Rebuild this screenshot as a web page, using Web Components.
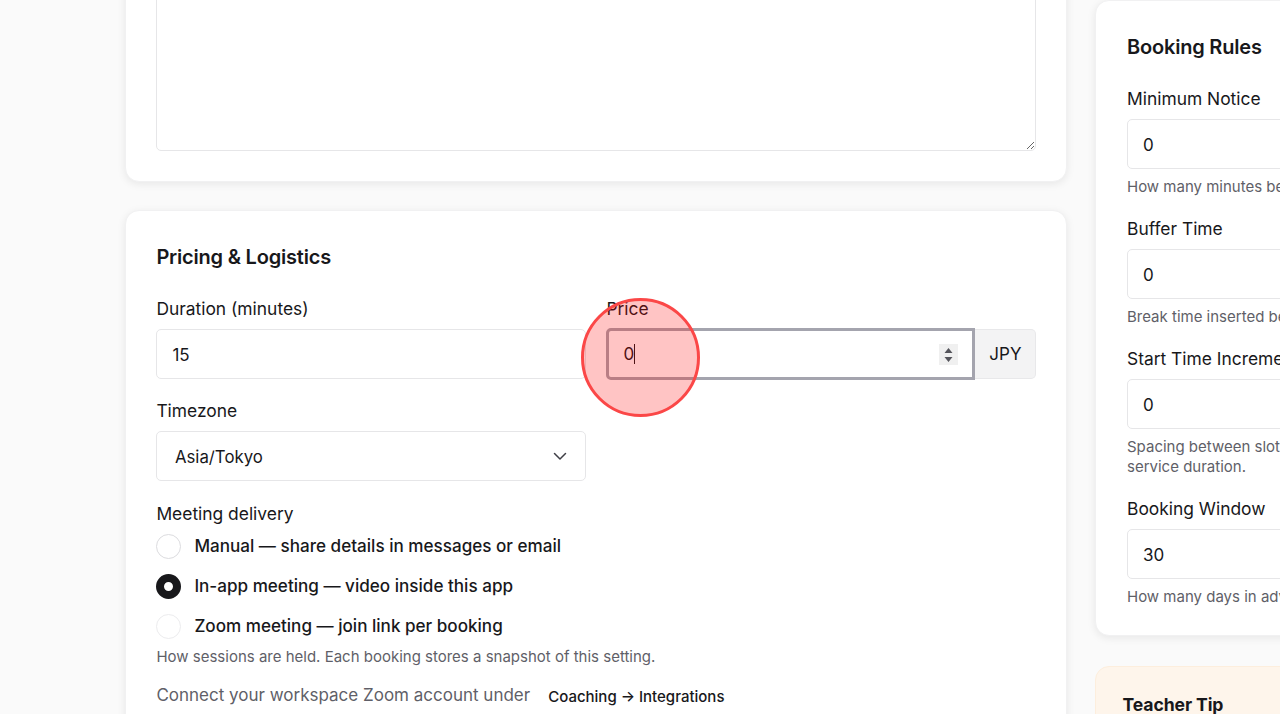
<!DOCTYPE html>
<html lang="en">
<head>
<meta charset="utf-8">
<title>Service settings</title>
<style>
  html, body { margin: 0; height: 714px; overflow: hidden; background: #fafafa; }
  body { font-family: Inter, "Liberation Sans", sans-serif; color: #18181b; font-size: 17px; }
  .page { display: grid; grid-template-columns: 942px 340px; column-gap: 28px; align-items: start; margin-left: 125px; width: 1310px; }
  .main { display: flex; flex-direction: column; gap: 28px; margin-top: -100px; }
  .side { display: flex; flex-direction: column; gap: 30px; --card-pad-x: 31px; --card-pad-bottom: 28px; }
  .grid { display: grid; grid-template-columns: 430px 430px; column-gap: 20px; }
  .stack { display: flex; flex-direction: column; gap: 20px; }
</style>
</head>
<body>
<template id="card-template">
  <style>
    :host { display: block; background: #fff; border: 1px solid #f1f1f2; border-radius: 14px; box-shadow: 0 2px 8px rgba(0,0,0,.08); padding: 30px var(--card-pad-x, 30.4px) var(--card-pad-bottom, 30px); }
    :host([tone="tip"]) { background: #fef5eb; border-color: #fdeedd; box-shadow: none; padding: 22px 26.5px 29px; }
    h2 { margin: 0 0 24px; font: 600 20px/32px Inter, "Liberation Sans", sans-serif; letter-spacing: -.2px; color: #18181b; }
    :host([tone="tip"]) h2 { font-size: 17.6px; font-weight: 700; margin-bottom: 8px; letter-spacing: -.1px; }
    :host(:not([heading])) h2 { display: none; }
  </style>
  <h2></h2>
  <slot></slot>
</template>
<template id="field-template">
  <style>
    :host { display: block; }
    .label { font-size: 17.4px; line-height: 24px; margin-bottom: 8px; color: #18181b; }
    .hint { font-size: 15px; line-height: 20px; color: #5f5f68; white-space: nowrap; }
    ::slotted([slot="hint"]) { display: block; margin-top: 8px; }
  </style>
  <div class="label"><slot name="label"></slot></div>
  <slot></slot>
  <div class="hint"><slot name="hint"></slot></div>
</template>
<template id="box-template">
  <style>
    :host { display: flex; align-items: center; box-sizing: border-box; height: 50px; background: #fff; border: 1px solid #e6e6e8; border-radius: 5px; padding: 1px 15px 0; font-size: 17px; color: #18181b; }
    :host([kind="select"]) { padding: 1px 17.5px 0; justify-content: space-between; font-size: 16.8px; }
    svg { display: none; }
    :host([kind="select"]) svg { display: block; margin: -1px 0 0; }
  </style>
  <slot></slot>
  <svg width="16" height="16" viewBox="0 0 16 16" fill="none" stroke="#3f3f46" stroke-width="1.5" stroke-linecap="round" stroke-linejoin="round"><path d="M2.500 5.500 8 11l5.500-5.500"/></svg>
</template>
<template id="price-template">
  <style>
    :host { display: flex; height: 50px; font-size: 17px; color: #18181b; }
    .input { position: relative; z-index: 1; flex: none; box-sizing: border-box; width: 369px; height: 52px; margin-top: -1px; display: flex; align-items: center; justify-content: space-between; background: #fff; border: 3px solid #a4a4ae; border-radius: 5px 0 0 5px; padding: 0 14px; }
    .value { display: flex; align-items: center; }
    .caret { width: 1px; height: 20px; background: #18181b; }
    .spin { width: 19px; height: 21px; background: #f0f0f0; display: block; }
    .unit { flex: 1; display: flex; align-items: center; justify-content: center; box-sizing: border-box; background: #f3f3f4; border: 1px solid #e8e8ea; border-left: 0; border-radius: 0 5px 5px 0; font-size: 17px; }
  </style>
  <div class="input">
    <span class="value"><slot></slot><span class="caret"></span></span>
    <svg class="spin" viewBox="0 0 19 21"><path fill="#55555c" d="M9.500 4 13.500 9H5.500zM5.500 13h8l-4 5z"/></svg>
  </div>
  <div class="unit"><slot name="unit"></slot></div>
</template>
<template id="radio-template">
  <style>
    :host { display: flex; align-items: center; gap: 13px; height: 25px; font-size: 17.1px; font-weight: 450; color: #18181b; }
    .dot { flex: none; box-sizing: border-box; width: 25px; height: 25px; border-radius: 50%; background: #fff; border: 1px solid #dcdcdf; }
    .text { margin-top: -2px; }
    :host([faint]) .dot { border-color: #ececee; }
    :host([checked]) .dot { border: 8px solid #18181b; }
  </style>
  <span class="dot"></span>
  <span class="text"><slot></slot></span>
</template>
<template id="pointer-template">
  <style>
    :host { position: absolute; left: 580.5px; top: 297.5px; width: 119px; height: 119px; box-sizing: border-box; border-radius: 50%; border: 3px solid #fb4747; background: rgba(255, 0, 0, .23); z-index: 5; pointer-events: none; }
  </style>
</template>

<div class="page">
  <div class="main">
    <app-card>
      <textarea style="display:block;box-sizing:border-box;width:880px;height:220px;border:1px solid #e6e6e8;border-radius:5px;background:#fff;outline:0;margin:0"></textarea>
    </app-card>
    <app-card heading="Pricing &amp; Logistics">
      <div class="stack">
        <div class="grid">
          <form-field>
            <span slot="label">Duration (minutes)</span>
            <input-box>15</input-box>
          </form-field>
          <form-field>
            <span slot="label">Price</span>
            <price-input>0<span slot="unit">JPY</span></price-input>
          </form-field>
        </div>
        <div class="grid">
          <form-field>
            <span slot="label">Timezone</span>
            <input-box kind="select">Asia/Tokyo</input-box>
          </form-field>
        </div>
        <form-field style="margin-top:1px">
          <span slot="label">Meeting delivery</span>
          <div class="stack" style="gap:15px">
            <radio-row>Manual — share details in messages or email</radio-row>
            <radio-row checked>In-app meeting — video inside this app</radio-row>
            <radio-row faint>Zoom meeting — join link per booking</radio-row>
          </div>
          <span slot="hint">How sessions are held. Each booking stores a snapshot of this setting.</span>
        </form-field>
        <div style="display:flex;align-items:baseline;gap:18px;margin-top:-2px;line-height:20px;white-space:nowrap">
          <span style="color:#5f5f68">Connect your workspace Zoom account under</span>
          <span style="font-size:15px;font-weight:450;position:relative;top:1px">Coaching → Integrations</span>
        </div>
      </div>
    </app-card>
  </div>
  <div class="side">
    <app-card heading="Booking Rules">
      <div class="stack">
        <form-field>
          <span slot="label">Minimum Notice</span>
          <input-box>0</input-box>
          <span slot="hint">How many minutes before booking</span>
        </form-field>
        <form-field>
          <span slot="label">Buffer Time</span>
          <input-box>0</input-box>
          <span slot="hint">Break time inserted between bookings</span>
        </form-field>
        <form-field>
          <span slot="label">Start Time Increment</span>
          <input-box>0</input-box>
          <span slot="hint">Spacing between slot starts; defaults to<br>service duration.</span>
        </form-field>
        <form-field>
          <span slot="label">Booking Window</span>
          <input-box>30</input-box>
          <span slot="hint">How many days in advance</span>
        </form-field>
      </div>
    </app-card>
    <app-card tone="tip" heading="Teacher Tip"></app-card>
  </div>
</div>
<click-pointer></click-pointer>

<script>
  // every element just clones its template into an open shadow root
  class TemplateElement extends HTMLElement {
    constructor () {
      super()
      let shadow = this.attachShadow({ mode: 'open' })
      let template = document.querySelector(this.constructor.templateId)
      shadow.appendChild(template.content.cloneNode(true))
    }
  }

  class AppCard extends TemplateElement {
    static templateId = '#card-template'
    connectedCallback () {
      this.shadowRoot.querySelector('h2').textContent = this.getAttribute('heading') || ''
    }
  }

  class FormField extends TemplateElement { static templateId = '#field-template' }
  class InputBox extends TemplateElement { static templateId = '#box-template' }
  class PriceInput extends TemplateElement { static templateId = '#price-template' }
  class RadioRow extends TemplateElement { static templateId = '#radio-template' }
  class ClickPointer extends TemplateElement { static templateId = '#pointer-template' }

  customElements.define('app-card', AppCard)
  customElements.define('form-field', FormField)
  customElements.define('input-box', InputBox)
  customElements.define('price-input', PriceInput)
  customElements.define('radio-row', RadioRow)
  customElements.define('click-pointer', ClickPointer)
</script>
</body>
</html>
